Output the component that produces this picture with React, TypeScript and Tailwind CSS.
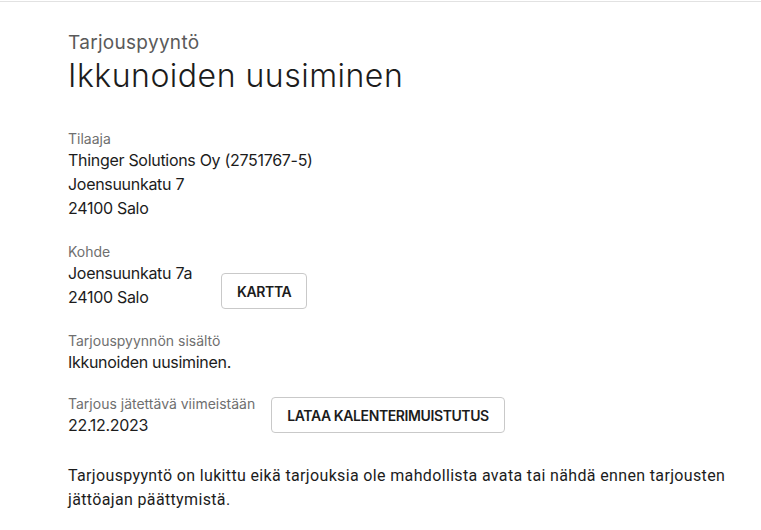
import React from 'react';

interface FieldProps {
  label: string;
  lines: string[];
}

const Field: React.FC<FieldProps> = ({ label, lines }) => (
  <div>
    <div className="text-[14px] leading-[18px] text-[#6f6f6f]">{label}</div>
    {lines.map((line) => (
      <div key={line} className="text-[16px] leading-[24px] tracking-[-0.3px] text-[#1c1c1c]">
        {line}
      </div>
    ))}
  </div>
);

const OutlineButton: React.FC<{ children: React.ReactNode }> = ({ children }) => (
  <button
    type="button"
    className="h-9 px-[15px] rounded border border-[#c9c9c9] bg-white text-[14px] font-semibold tracking-[-0.4px] text-[#1c1c1c] uppercase"
  >
    {children}
  </button>
);

export default function App() {
  return (
    <div
      className="min-h-[530px] w-full bg-white border-t border-[#e2e2e2] mt-px"
      style={{ fontFamily: 'Inter, "Noto Sans", sans-serif' }}
    >
      <div className="pl-[68px] pr-8 pt-[29px]">
        <div className="text-[19px] leading-[24px] tracking-[0.3px] text-[#5a5a5a]">Tarjouspyyntö</div>
        <h1 className="text-[32px] leading-[42px] font-light tracking-[0.5px] text-[#1c1c1c]">
          Ikkunoiden uusiminen
        </h1>

        <div className="mt-[33px] flex flex-col">
          <Field
            label="Tilaaja"
            lines={['Thinger Solutions Oy (2751767-5)', 'Joensuunkatu 7', '24100 Salo']}
          />

          <div className="mt-[23px] flex items-end gap-[29px]">
            <Field label="Kohde" lines={['Joensuunkatu 7a', '24100 Salo']} />
            <OutlineButton>Kartta</OutlineButton>
          </div>

          <div className="mt-[23px]">
            <Field label="Tarjouspyynnön sisältö" lines={['Ikkunoiden uusiminen.']} />
          </div>

          <div className="mt-[21px] flex items-start gap-4">
            <Field label="Tarjous jätettävä viimeistään" lines={['22.12.2023']} />
            <div className="mt-[2px]">
              <OutlineButton>Lataa kalenterimuistutus</OutlineButton>
            </div>
          </div>

          <p
            className="mt-[27px] text-[16px] leading-[24px] tracking-[0.35px] text-[#1c1c1c]"
            style={{ fontFamily: 'Roboto, "Liberation Sans", sans-serif' }}
          >
            Tarjouspyyntö on lukittu eikä tarjouksia ole mahdollista avata tai nähdä ennen tarjousten
            jättöajan päättymistä.
          </p>
        </div>
      </div>
    </div>
  );
}
